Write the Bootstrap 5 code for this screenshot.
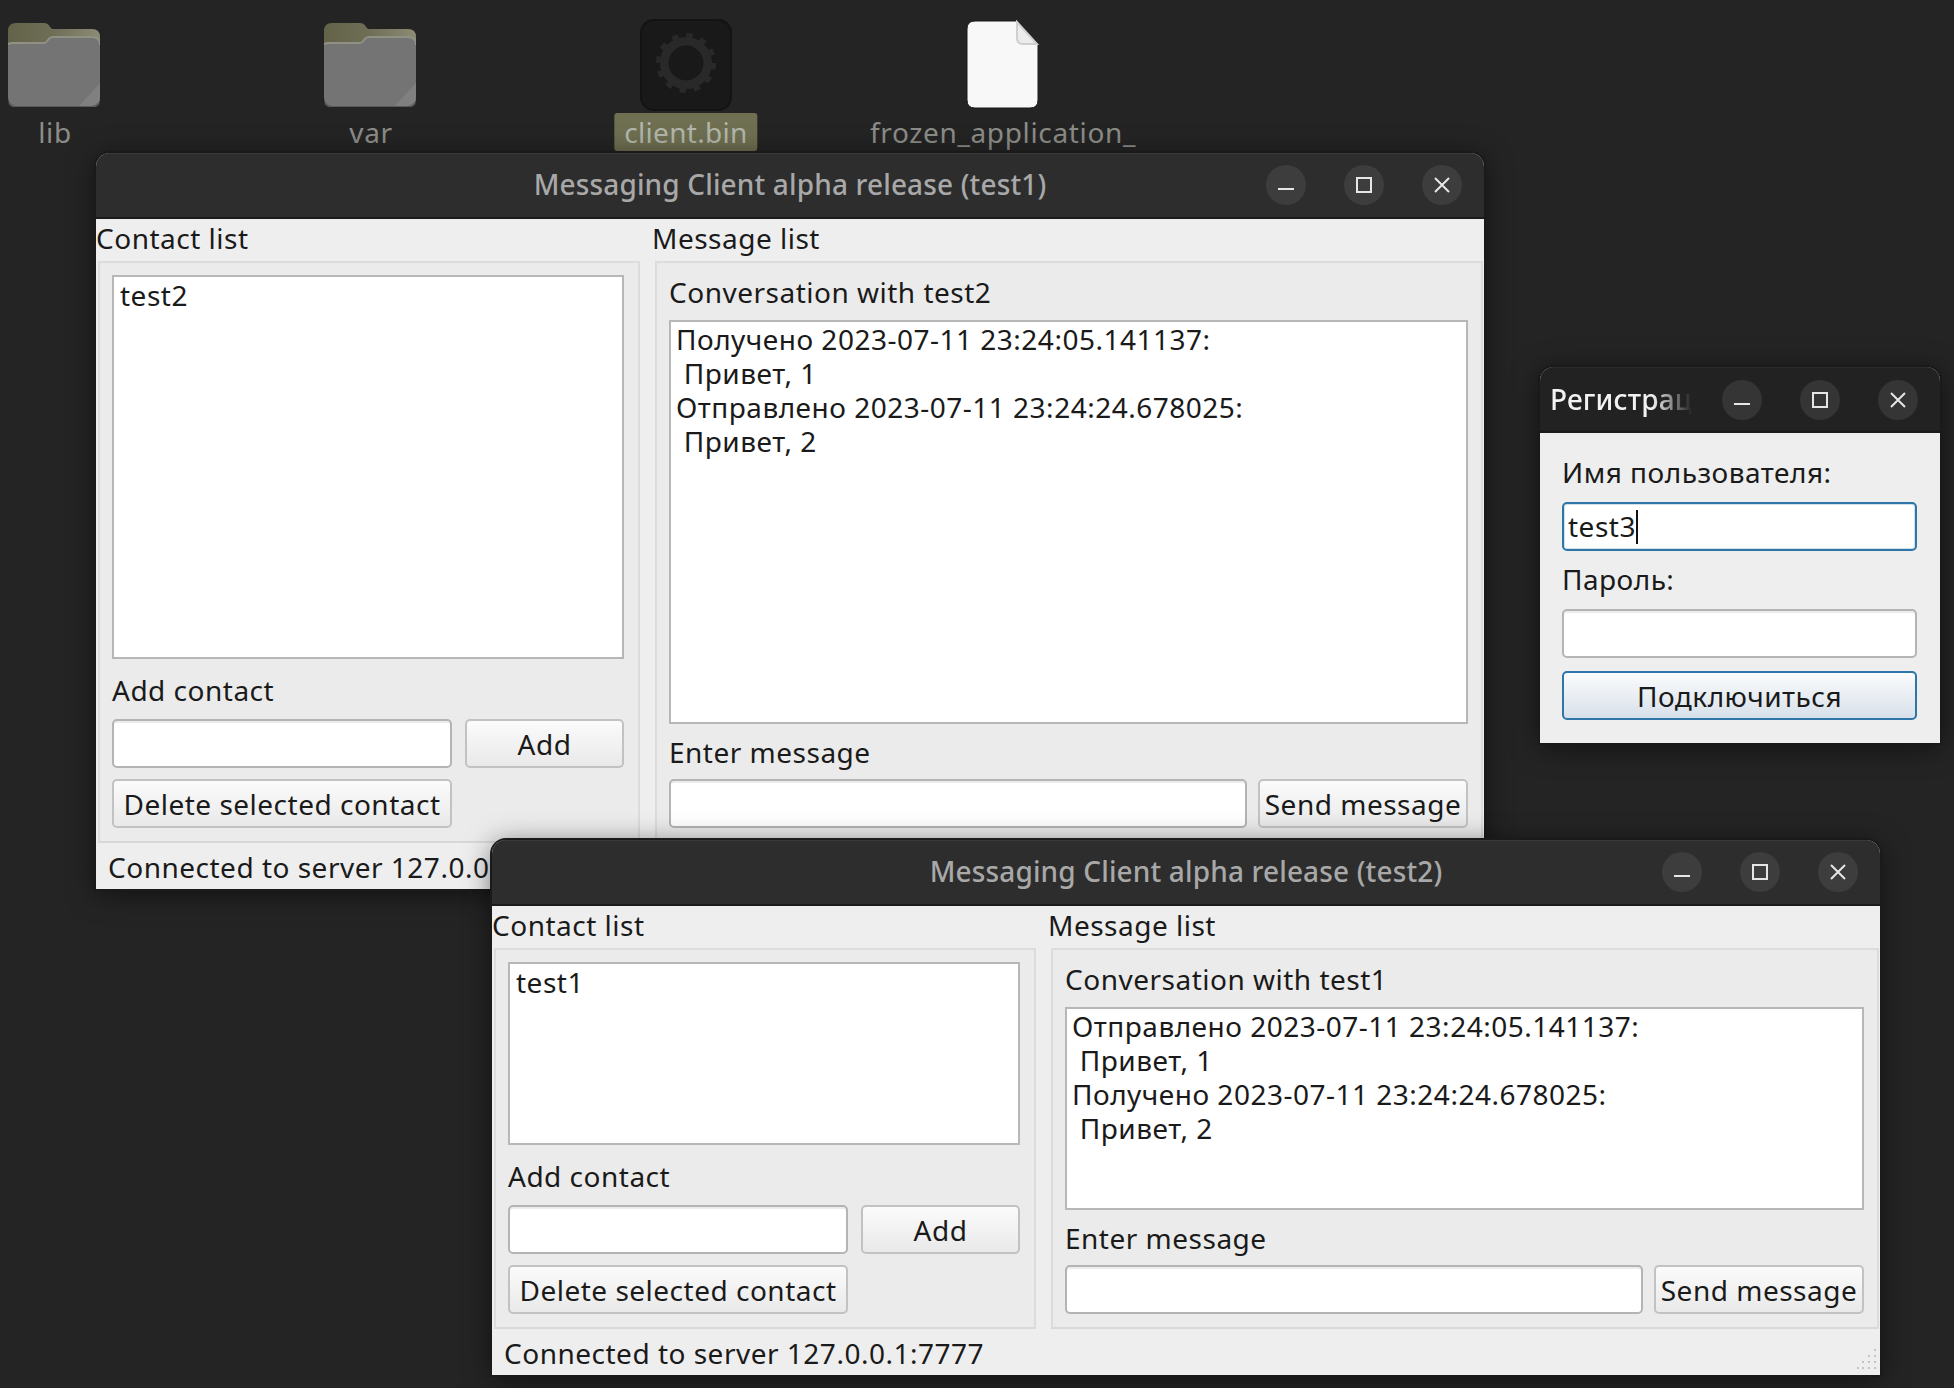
<!DOCTYPE html>
<html lang="en">
<head>
<meta charset="utf-8">
<title>Messaging Client</title>
<link href="https://cdn.jsdelivr.net/npm/bootstrap@5.3.0/dist/css/bootstrap.min.css" rel="stylesheet">
<style>
html,body{margin:0;height:100%}
body{background:#242424;font-family:"Noto Sans","Liberation Sans",sans-serif;font-size:28px;letter-spacing:.5px;color:#1a1a1a;overflow:hidden}
.desk{position:relative;width:1954px;height:1388px;overflow:hidden}
.dicon{position:absolute}
.dlabel{position:absolute;top:113px;height:38px;line-height:38px;color:#8c8d88;font-size:28px;letter-spacing:.65px;text-align:center;white-space:nowrap;transform:translateX(-50%)}
.dlabel-sel{background:#6f6f52;color:#b3b7ab;padding:0 10px;border-radius:3px;letter-spacing:.3px}
.win{position:absolute;background:#eeeeee;border-radius:14px 14px 0 0;box-shadow:0 0 0 2px #1a1a1a,0 4px 28px rgba(0,0,0,.55);overflow:hidden}
.win-a{left:96px;top:153px;width:1388px;height:736px;z-index:1}
.win-b{left:492px;top:840px;width:1388px;height:535px;z-index:3}
.win-c{left:1540px;top:367px;width:400px;height:376px;z-index:2}
.tbar{height:66px;padding-bottom:2px;background:#2d2d2d;display:grid;grid-template-columns:1fr auto 1fr;align-items:center;border-top:1px solid #3a3a3a;border-bottom:2px solid #1b1b1b;color:#a8a8a8;font-weight:500;letter-spacing:.15px}
.ttext{padding-bottom:2px}
.tbar-c{background:#222;display:flex;justify-content:space-between;border-top-color:#2c2c2c;color:#f2f2f2;padding-bottom:0}
.tname{margin-left:10px;padding-bottom:2px;white-space:nowrap;-webkit-mask-image:linear-gradient(90deg,#000 72%,transparent 100%);mask-image:linear-gradient(90deg,#000 72%,transparent 100%)}
.wctl{grid-column:3;justify-self:end;display:flex;gap:38px;padding-right:22px}
.wbtn{width:40px;height:40px;border-radius:50%;background:#3d3d3d;display:flex;align-items:center;justify-content:center}
.tbar-c .wbtn{background:#353535}
.wbody{height:calc(100% - 66px);display:flex;flex-direction:column}
.heads{height:42px;padding-bottom:4px;display:flex;align-items:center;flex:none}
.head-l{width:556px}
.panes{flex:1;display:flex;min-height:0;padding-left:2px}
.gbox{background:#ebebeb;border:2px solid #dcdcdc;border-bottom-color:#d8d8d8;display:flex;flex-direction:column;padding:0 13px 13px 12px;min-height:0}
.gbox-l{width:542px;padding-top:12px;padding-right:14px}
.gbox-r{width:828px;margin-left:15px}
.wtxt{background:#fff;border:2px solid #b7b7b7;flex:1;min-height:0;line-height:34px;color:#1a1a1a;padding-top:1px;padding-bottom:1px}
.wtxt-list{padding-left:6px;padding-right:6px}
.wtxt-msg{padding-top:0;padding-left:5px;padding-right:5px;white-space:pre}
.flabel{flex:none;display:flex;align-items:center}
.h61{height:60px;padding-top:1px}
.h58{height:57px}
.h56{height:55px}
.grid-l{display:grid;grid-template-columns:340px 159px;gap:11px 13px}
.row-msg{display:flex;gap:11px}
.fld.form-control,.fld.form-control:focus{height:49px;min-height:0;padding:0 4px;background:#fff;border:2px solid #b4b4b4;border-radius:5px;box-shadow:inset 0 2px 0 #ececec;font-size:28px;letter-spacing:.5px;color:#1a1a1a}
.fld-on.form-control{border-color:#2f76a8;box-shadow:inset 0 0 0 1px #cfe0ec;display:flex;align-items:center;padding:0 4px 2px}
.caret-bar{display:inline-block;width:2px;height:34px;background:#111;margin-top:2px}
.pbtn.btn{height:49px;padding:0;background:linear-gradient(#fbfbfb,#e9e9e9);border:2px solid #c2c2c2;border-radius:5px;font-size:28px;letter-spacing:.5px;color:#1a1a1a;line-height:1;white-space:nowrap}
.pbtn-on.btn{background:linear-gradient(#fbfcfd,#d7e0e9);border-color:#2f76a8}
.send-w{width:210px;flex:none}
.sbar{height:46px;padding-top:2px;flex:none;display:flex;align-items:center;padding-left:12px;position:relative}
.grip{position:absolute;right:3px;bottom:3px}
.regform{padding:22px 23px 22px 22px;display:flex;flex-direction:column}
.h40{height:37px;padding-bottom:3px}
.h40b{padding-bottom:2px}
.mt-r1{margin-top:10px}
.mt-r2{margin-top:11px}
.mt-r3{margin-top:13px}
</style>
</head>
<body>
<div class="desk">
  <!-- desktop icons -->
  <svg class="dicon" style="left:8px;top:23px" width="92" height="84" viewBox="0 0 92 84"><defs><linearGradient id="fo" x1="0" y1="0" x2="1" y2="0"><stop offset="0" stop-color="#63634a"/><stop offset=".5" stop-color="#6f6f57"/><stop offset="1" stop-color="#8c8c74"/></linearGradient></defs><path d="M8 0H36q4 0 6 4l2 2H84q8 0 8 8V40H0V8q0-8 8-8Z" fill="url(#fo)"/><path d="M0 22q0-2 4-2H36q2 0 4-3l1-1q1-2 4-2H84q8 0 8 8V74q0 10-8 10H8q-8 0-8-10Z" fill="#747474"/><path d="M0 22q0-2 4-2H36q2 0 4-3l1-1q1-2 4-2H84q8 0 8 8" fill="none" stroke="#909085" stroke-width="2"/><path d="M92 60V74q0 10-8 10H70Z" fill="#808080"/><path d="M1 80q2 3 7 4H84q5-1 7-4" fill="none" stroke="#5a5a5a" stroke-width="2"/></svg>
  <div class="dlabel" style="left:55px">lib</div>
  <svg class="dicon" style="left:324px;top:23px" width="92" height="84" viewBox="0 0 92 84"><path d="M8 0H36q4 0 6 4l2 2H84q8 0 8 8V40H0V8q0-8 8-8Z" fill="url(#fo)"/><path d="M0 22q0-2 4-2H36q2 0 4-3l1-1q1-2 4-2H84q8 0 8 8V74q0 10-8 10H8q-8 0-8-10Z" fill="#747474"/><path d="M0 22q0-2 4-2H36q2 0 4-3l1-1q1-2 4-2H84q8 0 8 8" fill="none" stroke="#909085" stroke-width="2"/><path d="M92 60V74q0 10-8 10H70Z" fill="#808080"/><path d="M1 80q2 3 7 4H84q5-1 7-4" fill="none" stroke="#5a5a5a" stroke-width="2"/></svg>
  <div class="dlabel" style="left:371px">var</div>
  <svg class="dicon" style="left:640px;top:19px" width="92" height="92" viewBox="0 0 92 92"><rect x="1" y="1" width="90" height="90" rx="13" fill="#191919" stroke="#131313" stroke-width="2"/><circle cx="46" cy="44" r="21.75" fill="none" stroke="#292929" stroke-width="8.5"/><circle cx="46" cy="44" r="27.5" fill="none" stroke="#292929" stroke-width="5" stroke-dasharray="6.4 8"/></svg>
  <div class="dlabel dlabel-sel" style="left:686px">client.bin</div>
  <svg class="dicon" style="left:966px;top:20px" width="74" height="90" viewBox="0 0 74 90"><path d="M9 1H51L72 24V80q0 8-8 8H9q-8 0-8-8V9q0-8 8-8Z" fill="#f8f8f8" stroke="#1a1a1a" stroke-width="1"/><path d="M51 2V18q0 6 6 6H71Z" fill="#ececec" stroke="#cfcfcf" stroke-width="2"/></svg>
  <div class="dlabel" style="left:1003px">frozen_application_</div>

  <!-- window A -->
  <div class="win win-a">
    <div class="tbar"><span></span><span class="ttext">Messaging Client alpha release (test1)</span>
      <div class="wctl">
        <div class="wbtn"><svg width="16" height="16" viewBox="0 0 16 16"><path d="M0 12H16" stroke="#e6e6e6" stroke-width="2"/></svg></div>
        <div class="wbtn"><svg width="16" height="16" viewBox="0 0 16 16"><rect x="1" y="1" width="14" height="14" fill="none" stroke="#e6e6e6" stroke-width="2"/></svg></div>
        <div class="wbtn"><svg width="16" height="16" viewBox="0 0 16 16"><path d="M1 1 15 15M15 1 1 15" stroke="#e6e6e6" stroke-width="2"/></svg></div>
      </div>
    </div>
    <div class="wbody">
      <div class="heads"><div class="head-l">Contact list</div><div>Message list</div></div>
      <div class="panes">
        <div class="gbox gbox-l">
          <div class="wtxt wtxt-list">test2</div>
          <div class="flabel h61">Add contact</div>
          <div class="grid-l">
            <input class="form-control fld" type="text" aria-label="Add contact">
            <button class="btn pbtn" type="button">Add</button>
            <button class="btn pbtn" type="button">Delete selected contact</button>
          </div>
        </div>
        <div class="gbox gbox-r">
          <div class="flabel h58">Conversation with test2</div>
          <div class="wtxt wtxt-msg">Получено 2023-07-11 23:24:05.141137:
 Привет, 1
Отправлено 2023-07-11 23:24:24.678025:
 Привет, 2</div>
          <div class="flabel h56">Enter message</div>
          <div class="row-msg"><input class="form-control fld" type="text" aria-label="Enter message"><button class="btn pbtn send-w" type="button">Send message</button></div>
        </div>
      </div>
      <div class="sbar">Connected to server 127.0.0.1:7777</div>
    </div>
  </div>

  <!-- window B -->
  <div class="win win-b">
    <div class="tbar"><span></span><span class="ttext">Messaging Client alpha release (test2)</span>
      <div class="wctl">
        <div class="wbtn"><svg width="16" height="16" viewBox="0 0 16 16"><path d="M0 12H16" stroke="#e6e6e6" stroke-width="2"/></svg></div>
        <div class="wbtn"><svg width="16" height="16" viewBox="0 0 16 16"><rect x="1" y="1" width="14" height="14" fill="none" stroke="#e6e6e6" stroke-width="2"/></svg></div>
        <div class="wbtn"><svg width="16" height="16" viewBox="0 0 16 16"><path d="M1 1 15 15M15 1 1 15" stroke="#e6e6e6" stroke-width="2"/></svg></div>
      </div>
    </div>
    <div class="wbody">
      <div class="heads"><div class="head-l">Contact list</div><div>Message list</div></div>
      <div class="panes">
        <div class="gbox gbox-l">
          <div class="wtxt wtxt-list">test1</div>
          <div class="flabel h61">Add contact</div>
          <div class="grid-l">
            <input class="form-control fld" type="text" aria-label="Add contact">
            <button class="btn pbtn" type="button">Add</button>
            <button class="btn pbtn" type="button">Delete selected contact</button>
          </div>
        </div>
        <div class="gbox gbox-r">
          <div class="flabel h58">Conversation with test1</div>
          <div class="wtxt wtxt-msg">Отправлено 2023-07-11 23:24:05.141137:
 Привет, 1
Получено 2023-07-11 23:24:24.678025:
 Привет, 2</div>
          <div class="flabel h56">Enter message</div>
          <div class="row-msg"><input class="form-control fld" type="text" aria-label="Enter message"><button class="btn pbtn send-w" type="button">Send message</button></div>
        </div>
      </div>
      <div class="sbar">Connected to server 127.0.0.1:7777
        <svg class="grip" width="20" height="24" viewBox="0 0 20 24" fill="#c4c4c4"><rect x="17" y="1" width="2" height="2"/><rect x="17" y="7" width="2" height="2"/><rect x="11" y="7" width="2" height="2"/><rect x="17" y="13" width="2" height="2"/><rect x="11" y="13" width="2" height="2"/><rect x="5" y="13" width="2" height="2"/><rect x="17" y="19" width="2" height="2"/><rect x="11" y="19" width="2" height="2"/><rect x="5" y="19" width="2" height="2"/><rect x="0" y="19" width="2" height="2"/></svg>
      </div>
    </div>
  </div>

  <!-- window C -->
  <div class="win win-c">
    <div class="tbar tbar-c"><div class="tname">Регистрац</div>
      <div class="wctl">
        <div class="wbtn"><svg width="16" height="16" viewBox="0 0 16 16"><path d="M0 12H16" stroke="#e6e6e6" stroke-width="2"/></svg></div>
        <div class="wbtn"><svg width="16" height="16" viewBox="0 0 16 16"><rect x="1" y="1" width="14" height="14" fill="none" stroke="#e6e6e6" stroke-width="2"/></svg></div>
        <div class="wbtn"><svg width="16" height="16" viewBox="0 0 16 16"><path d="M1 1 15 15M15 1 1 15" stroke="#e6e6e6" stroke-width="2"/></svg></div>
      </div>
    </div>
    <div class="regform">
      <div class="flabel h40">Имя пользователя:</div>
      <div class="form-control fld fld-on mt-r1"><span>test3</span><span class="caret-bar"></span></div>
      <div class="flabel h40 mt-r2">Пароль:</div>
      <input class="form-control fld mt-r1" type="password" aria-label="Пароль">
      <button class="btn pbtn pbtn-on mt-r3" type="button">Подключиться</button>
    </div>
  </div>
</div>
<script src="https://cdn.jsdelivr.net/npm/bootstrap@5.3.0/dist/js/bootstrap.bundle.min.js"></script>
</body>
</html>
